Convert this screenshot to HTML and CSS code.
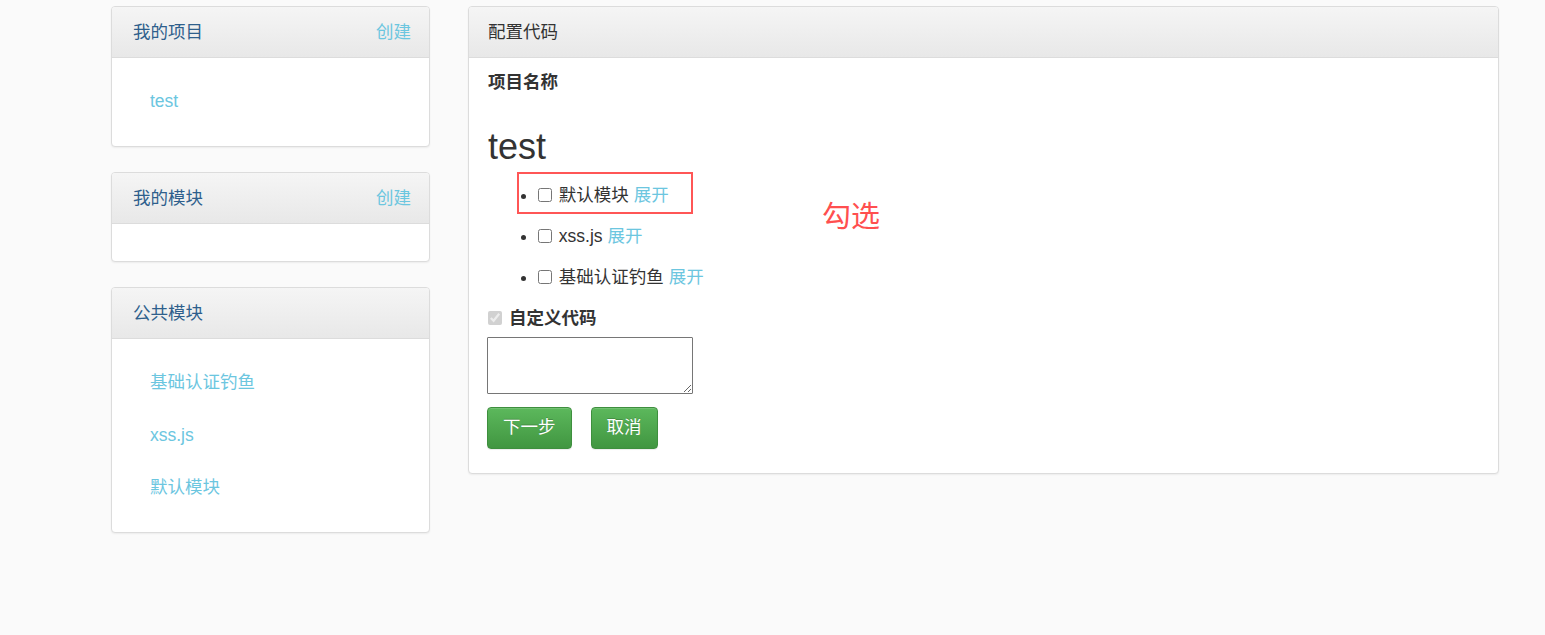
FILE: index.html
```html
<!DOCTYPE html>
<html lang="zh-CN">
<head>
    <meta charset="UTF-8">
    <meta name="viewport" content="width=device-width, initial-scale=1.0">
    <title>配置代码</title>
    <link rel="stylesheet" href="styles.css">
</head>
<body>

<div class="page">
    <!-- Left column: project and module lists -->
    <div class="side">
        <div class="panel">
            <div class="panel-heading">
                <span class="side-title">我的项目</span>
                <a href="#" class="link">创建</a>
            </div>
            <ul class="side-list">
                <li><a href="#" class="link">test</a></li>
            </ul>
        </div>

        <div class="panel">
            <div class="panel-heading">
                <span class="side-title">我的模块</span>
                <a href="#" class="link">创建</a>
            </div>
            <ul class="side-list empty"></ul>
        </div>

        <div class="panel">
            <div class="panel-heading">
                <span class="side-title">公共模块</span>
            </div>
            <ul class="side-list">
                <li><a href="#" class="link">基础认证钓鱼</a></li>
                <li><a href="#" class="link">xss.js</a></li>
                <li><a href="#" class="link">默认模块</a></li>
            </ul>
        </div>
    </div>

    <!-- Main column: code configuration form -->
    <div class="main">
        <div class="panel">
            <div class="panel-heading">
                <span class="main-title">配置代码</span>
            </div>
            <div class="panel-body">
                <div class="label">项目名称</div>
                <h1 class="project-name">test</h1>

                <ul class="module-list">
                    <li><input type="checkbox"> 默认模块 <a href="#" class="link">展开</a></li>
                    <li><input type="checkbox"> xss.js <a href="#" class="link">展开</a></li>
                    <li><input type="checkbox"> 基础认证钓鱼 <a href="#" class="link">展开</a></li>
                </ul>

                <label class="custom-code">
                    <input type="checkbox" checked disabled>
                    <span>自定义代码</span>
                </label>
                <textarea class="code-input"></textarea>

                <div class="actions">
                    <button class="btn">下一步</button>
                    <button class="btn">取消</button>
                </div>

                <div class="mark-box"></div>
                <div class="mark-text">勾选</div>
            </div>
        </div>
    </div>
</div>

</body>
</html>
```

FILE: styles.css
```css
body {
    margin: 0;
    background-color: #fafafa;
    font-family: "Liberation Sans", "Noto Sans CJK SC", sans-serif;
    font-size: 17.5px;
    color: #333;
}

.page {
    display: grid;
    grid-template-columns: 319px 1031px;
    gap: 38px;
    padding: 6px 0 0 111px;
}

/* Panels */
.panel {
    background-color: #fff;
    border: 1px solid #dcdcdc;
    border-radius: 4px;
    box-shadow: 0 1px 2px rgba(0, 0, 0, 0.06);
    margin-bottom: 25px;
}

.panel-heading {
    display: flex;
    align-items: center;
    justify-content: space-between;
    box-sizing: border-box;
    height: 51px;
    padding: 0 18px 3px 21px;
    background-image: linear-gradient(#f5f5f5, #e8e8e8);
    border-bottom: 1px solid #dcdcdc;
    border-radius: 3px 3px 0 0;
}

.main .panel-heading {
    padding-left: 19px;
}

.side-title {
    color: #2e5f8c;
}

.main-title {
    color: #333;
}

.link {
    color: #6cc6df;
    text-decoration: none;
}

/* Side lists */
.side-list {
    list-style: none;
    margin: 0;
    padding: 17px 0 18.5px;
}

.side-list.empty {
    padding: 0;
    height: 37px;
}

.side-list li {
    height: 52.5px;
    line-height: 52.5px;
    padding-left: 38px;
}

/* Main form */
.panel-body {
    position: relative;
    padding: 12px 19px 24px;
}

.label {
    font-weight: bold;
    line-height: 24px;
}

.project-name {
    margin: 33px 0 8px;
    font-size: 36px;
    font-weight: normal;
    line-height: 1.1;
}

.module-list {
    margin: 0;
    padding-left: 50px;
}

.module-list li {
    line-height: 41px;
}

.module-list input {
    margin: 0 2px 0 0;
    width: 14px;
    height: 14px;
    position: relative;
    top: 1px;
}

.custom-code {
    display: flex;
    align-items: center;
    gap: 7px;
    margin-top: 8px;
    line-height: 24px;
    font-weight: bold;
}

.custom-code input {
    margin: 0;
    width: 14px;
    height: 14px;
}

.code-input {
    display: block;
    box-sizing: border-box;
    width: 206px;
    height: 57px;
    margin: 7px 0 0 -1px;
    border: 1px solid #767676;
    border-radius: 1px;
    resize: both;
}

.actions {
    display: flex;
    gap: 19px;
    margin: 13px 0 0 -1px;
}

.btn {
    font-family: inherit;
    font-size: 17.5px;
    line-height: 24px;
    padding: 7px 15px 9px;
    color: #fff;
    background-image: linear-gradient(#5cb85c, #419641);
    border: 1px solid #3e8f3e;
    border-radius: 4px;
    text-shadow: 0 -1px 0 rgba(0, 0, 0, 0.2);
    box-shadow: inset 0 1px 0 rgba(255, 255, 255, 0.15), 0 1px 1px rgba(0, 0, 0, 0.075);
    cursor: pointer;
}

/* Red hint around the first module */
.mark-box {
    position: absolute;
    left: 48px;
    top: 114px;
    width: 172px;
    height: 38px;
    border: 2px solid #ff5656;
}

.mark-text {
    position: absolute;
    left: 353px;
    top: 139px;
    font-size: 29px;
    line-height: 40px;
    color: #ff4f4f;
}
```
